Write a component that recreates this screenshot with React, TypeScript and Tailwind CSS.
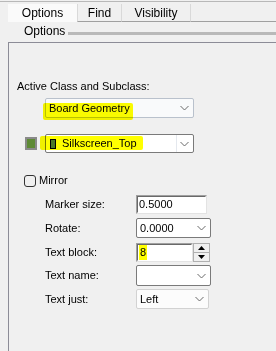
import React from "react";

function Chevron() {
  return (
    <svg width="9" height="6" viewBox="0 0 9 6" className="shrink-0">
      <path d="M0.5 1 L4.5 5 L8.5 1" fill="none" stroke="#6a6a6a" strokeWidth="1" />
    </svg>
  );
}

function Combo({
  w,
  h,
  text,
  tone = "dark",
  split,
}: {
  w: string;
  h: string;
  text?: string;
  tone?: "dark" | "light" | "blue";
  split?: boolean;
}) {
  const border =
    tone === "dark" ? "border-[#7a7a7a] bg-white" : tone === "blue" ? "border-[#b9c1cc] bg-[#f9fafb]" : "border-[#d2d2d2] bg-[#fcfcfc]";
  return (
    <div className={`${w} ${h} ${border} border rounded-[2px] flex items-center`}>
      <div className="flex-1 pl-[3px] text-black leading-none">{text}</div>
      {split && <div className="w-px self-stretch bg-[#e4e8ee]" />}
      <div className="w-[16px] flex justify-center pr-[2px]">
        <Chevron />
      </div>
    </div>
  );
}

function Sunken({ w, children }: { w: string; children?: React.ReactNode }) {
  return (
    <div className={`${w} h-[19px] border border-t-[#a0a0a0] border-l-[#a0a0a0] border-r-[#e3e3e3] border-b-[#e3e3e3]`}>
      <div className="h-full bg-white border border-t-[#696969] border-l-[#696969] border-r-white border-b-white flex items-center pl-[1px] leading-none">
        {children}
      </div>
    </div>
  );
}

function Row({ label, mt, children }: { label: string; mt: string; children: React.ReactNode }) {
  return (
    <div className={`${mt} flex items-center`}>
      <div className="w-[127px] pl-[36px]">{label}</div>
      {children}
    </div>
  );
}

export default function App() {
  return (
    <div className="w-[276px] h-[351px] bg-[#f0f0f0] overflow-hidden text-[11px] text-black font-['Liberation_Sans',sans-serif]">
      <div className="h-px mt-px bg-[#b8b8b8]" />
      {/* tabs */}
      <div className="mt-px flex items-end h-[19px] text-[12px]">
        <div className="w-[8px] h-full" />
        <div className="w-[69px] h-[18px] bg-[#fafafa] flex items-center justify-center">Options</div>
        <div className="w-[45px] h-[18px] border-x border-[#d9d9d9] flex items-center justify-center border-b border-b-[#a0a0a0]">
          Find
        </div>
        <div className="w-[69px] h-[18px] border-r border-[#d9d9d9] flex items-center justify-center border-b border-b-[#a0a0a0]">
          Visibility
        </div>
        <div className="flex-1 h-full border-b border-[#a0a0a0]" />
      </div>
      {/* group heading */}
      <div className="flex items-center h-[16px] mt-[1px] text-[12px]">
        <div className="pl-[24px] pr-[3px]">Options</div>
        <div className="flex-1 h-[3px] mt-[5px] bg-[#b9b9b9]" />
      </div>
      {/* panel */}
      <div className="ml-[8px] mt-[3px] h-[320px] border-t border-l border-[#8c8c97]">
        <div className="pl-[8px] mt-[37px] leading-[13px]">Active Class and Subclass:</div>
        <div className="ml-[36px] mt-[5px] relative w-fit">
          <Combo w="w-[149px]" h="h-[20px]" tone="blue" />
          {/* highlighter marks */}
          <div className="absolute left-[-2px] top-[5px] w-[90px] h-[17px] bg-[#ffff00] rounded-[2px] mix-blend-multiply" />
          <div className="absolute left-[4px] top-[5px] leading-none">Board Geometry</div>
        </div>
        <div className="mt-[16px] flex items-center">
          <div className="ml-[16px] w-[12px] h-[13px] border-2 border-[#8a8a8a] bg-[#5e8a35]" />
          <div className="ml-[8px] relative">
            <Combo w="w-[149px]" h="h-[19px]" split />
            <div className="absolute left-[-5px] top-[2px] w-[103px] h-[14px] bg-[#ffff00] rounded-[2px] mix-blend-multiply" />
            <div className="absolute left-[5px] top-0 h-full flex items-center gap-[6px] leading-none">
              <div className="w-[6px] h-[10px] border border-black bg-[#4e7a28]" />
              <span>Silkscreen_Top</span>
            </div>
          </div>
        </div>
        <div className="mt-[21px] ml-[15px] flex items-center gap-[3px] h-[13px]">
          <div className="w-[12px] h-[12px] border border-[#333] rounded-[3px] bg-[#f0f0f0]" />
          <span>Mirror</span>
        </div>
        <Row label="Marker size:" mt="mt-[8px]">
          <Sunken w="w-[71px]">0.5000</Sunken>
        </Row>
        <Row label="Rotate:" mt="mt-[4px]">
          <Combo w="w-[75px]" h="h-[20px]" text="0.0000" />
        </Row>
        <Row label="Text block:" mt="mt-[5px]">
          <div className="flex">
            <Sunken w="w-[57px]">
              <span className="bg-[#ffff00] px-[1px] py-[2px]">8</span>
            </Sunken>
            <div className="w-[17px] h-[19px] border border-[#b0b0b0] bg-[#f0f0f0] flex flex-col">
              <div className="flex-1 flex items-center justify-center border-b border-[#b0b0b0]">
                <svg width="7" height="4" viewBox="0 0 7 4">
                  <path d="M0 4 L3.5 0 L7 4 Z" fill="#000" />
                </svg>
              </div>
              <div className="flex-1 flex items-center justify-center">
                <svg width="7" height="4" viewBox="0 0 7 4">
                  <path d="M0 0 L3.5 4 L7 0 Z" fill="#000" />
                </svg>
              </div>
            </div>
          </div>
        </Row>
        <Row label="Text name:" mt="mt-[3px]">
          <Combo w="w-[75px]" h="h-[21px]" />
        </Row>
        <Row label="Text just:" mt="mt-[3px]">
          <Combo w="w-[73px]" h="h-[20px]" text="Left" tone="light" />
        </Row>
      </div>
    </div>
  );
}
